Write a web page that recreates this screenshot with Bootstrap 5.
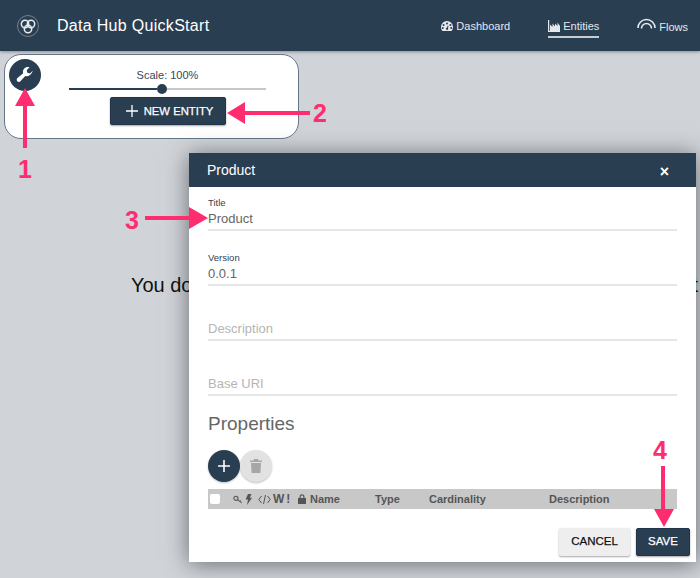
<!DOCTYPE html>
<html lang="en">
<head>
    <meta charset="UTF-8">
    <meta name="viewport" content="width=device-width, initial-scale=1.0">
    <title>Data Hub QuickStart</title>
    <link href="https://cdn.jsdelivr.net/npm/bootstrap@5.3.0/dist/css/bootstrap.min.css" rel="stylesheet">
    <style>
        html, body { height: 100%; }
        body { background: #d0d4d9; font-family: "Liberation Sans", Arial, sans-serif; overflow: hidden; position: relative; }
        .hub-bar { background: #2a3e52; height: 51px; padding: 0; box-shadow: 0 1px 3px rgba(0,0,0,.35); }
        .hub-brand { color: #fff; font-size: 16px; letter-spacing: .3px; margin-left: 17px; gap: 18px; padding: 0; }
        .hub-brand:hover { color: #fff; }
        .hub-links { gap: 38px; margin-right: 12px; height: 51px; }
        .hub-link { color: #e4e8ec; font-size: 11px; padding: 0 0 2px; display: flex; align-items: center; gap: 3px; height: 20px; margin-top: 5px; border-bottom: 2px solid transparent; }
        .hub-link:hover { color: #fff; }
        .hub-link.is-on { border-bottom-color: #c6ccd3; }
        .flow-icon { margin-bottom: 6px; }
        .flow-text { margin-top: 2px; }
        .tool-panel { width: 295px; height: 85px; margin: 3px 0 0 4px; padding: 4px; background: #fff; border: 1px solid #66768a; border-radius: 17px; }
        .tool-round { width: 32px; height: 32px; border-radius: 50%; background: #2a3e52; border: 0; padding: 0; flex: none; }
        .scale-label { font-size: 11px; color: #35475a; margin-top: 10px; line-height: 13px; }
        .scale-track { width: 197px; height: 10px; margin-top: 2px; }
        .scale-fill { height: 2px; background: #2a3e52; width: 88px; }
        .scale-dot { width: 10px; height: 10px; border-radius: 50%; background: #2a3e52; }
        .scale-rest { height: 2px; background: #c4c8cc; flex: 1; }
        .btn-hub { background: #2a3e52; color: #fff; border: 1px solid #22344a; border-radius: 2px; font-size: 11.5px; font-weight: 400; -webkit-text-stroke: .25px currentColor; height: 28px; padding: 0; box-shadow: 0 1px 2px rgba(0,0,0,.35); }
        .btn-hub:hover { background: #2a3e52; color: #fff; }
        .btn-new { width: 116px; margin-top: 3px; gap: 6px; padding-left: 4px; font-size: 11.3px; }
        .empty-note { font-size: 20px; letter-spacing: -.012px; color: #111; white-space: nowrap; margin: 134px 0 0 131px; line-height: 24px; }
        .dialog-box { position: absolute; left: 189px; top: 153px; width: 507px; height: 409px; background: #fff; border: 0; border-radius: 0; box-shadow: 0 2px 22px rgba(0,0,0,.5); }
        .dialog-head { background: #2a3e52; color: #fff; height: 34px; flex: none; padding: 0 27px 0 18px; font-size: 14px; border-radius: 0 !important; border: 0; }
        .dialog-close { color: #fff; font-size: 16px; font-weight: 700; line-height: 1; background: none; border: 0; padding: 0; margin-top: 3px; }
        .dialog-body { padding: 10px 19px 0; flex: none; }
        .hub-field { height: 34px; margin-bottom: 21px; }
        .hub-field label { display: block; font-size: 9.5px; color: #2f4254; line-height: 11px; min-height: 11px; margin: 0; }
        .hub-field input { border: 0; border-bottom: 2px solid #e6e6e6; border-radius: 0; padding: 0 0 1px; height: 23px; font-size: 13px; color: #666; box-shadow: none; background: transparent; }
        .hub-field input::placeholder { color: #b5b5b5; }
        .props-title { font-size: 19px; font-weight: 400; color: #666; line-height: 24px; margin: -5px 0 0; }
        .round-add, .round-del { width: 32px; height: 32px; border-radius: 50%; border: 0; padding: 0; flex: none; box-shadow: 0 1px 2px rgba(0,0,0,.25); }
        .round-add { background: #2a3e52; }
        .round-del { background: #e2e2e2; }
        .props-tools { margin-top: 14px; }
        .props-head { background: #c8c8c8; height: 20px; margin-top: 7px; font-size: 11px; font-weight: 700; color: #555; }
        .props-check { width: 10px; height: 10px; background: #fff; border-radius: 2px; margin-left: 2px; flex: none; }
        .col-flags { width: 65px; margin-left: 13px; gap: 2px; flex: none; }
        .flag-letter { font-size: 12px; }
        .col-name { width: 65px; flex: none; margin-left: 4px; }
        .col-type { width: 54px; flex: none; }
        .col-card { width: 120px; flex: none; }
        .dialog-foot { padding: 0 6px 0 0; margin-top: 19px; gap: 6px; }
        .btn-cancel { background: #eee; color: #111; border: 0; width: 71px; box-shadow: 0 1px 2px rgba(0,0,0,.35); }
        .btn-cancel:hover { background: #eee; color: #111; }
        .btn-save { width: 54px; }
        .note-layer { position: absolute; left: 0; top: 0; width: 700px; height: 578px; pointer-events: none; }
        .note-num { position: absolute; color: #ff2d6f; font-size: 25px; font-weight: 700; line-height: 25px; }
        .note-a { left: 18px; top: 157px; }
        .note-b { left: 313px; top: 101px; }
        .note-c { left: 125px; top: 208px; }
        .note-d { left: 653px; top: 438px; }
    </style>
</head>
<body>
    <nav class="navbar hub-bar d-flex flex-nowrap justify-content-between align-items-center">
        <a class="navbar-brand hub-brand d-flex align-items-center" href="#">
            <svg width="22" height="22" viewBox="0 0 22 22" fill="none" stroke="#e8ebee">
                <circle cx="11" cy="11" r="10.5" stroke="#8795a3" stroke-width=".8"/>
                <circle cx="8" cy="9" r="3.7" stroke-width="1.5"/>
                <circle cx="14" cy="9" r="3.7" stroke-width="1.5"/>
                <circle cx="11" cy="14" r="3.7" stroke-width="1.5"/>
            </svg>
            <span>Data Hub QuickStart</span>
        </a>
        <div class="d-flex align-items-center hub-links">
            <a class="nav-link hub-link" href="#">
                <svg width="12" height="10" viewBox="0 0 12 10"><path fill="#e4e8ec" fill-rule="evenodd" d="M6 0a6 6 0 0 0-6 6c0 1.500.5 2.900 1.400 4h9.200A6 6 0 0 0 12 6a6 6 0 0 0-6-6zM6 1.500a1 1 0 1 1 0 2 1 1 0 0 1 0-2zM2.600 3a1 1 0 1 1 0 2 1 1 0 0 1 0-2zm6.800 0a1 1 0 1 1 0 2 1 1 0 0 1 0-2zM6.800 4.500 7.600 5 6.900 7a1.100 1.100 0 1 1-1-.3zM1.800 6a1 1 0 1 1 0 2 1 1 0 0 1 0-2zm8.400 0a1 1 0 1 1 0 2 1 1 0 0 1 0-2z"/></svg>
                Dashboard
            </a>
            <a class="nav-link hub-link is-on" href="#">
                <svg width="12" height="12" viewBox="0 0 12 12"><path fill="#e4e8ec" d="M0 0h1.200v10.800H12V12H0zM2 10.800V4.500L4.500 7V3.500L7 6.500V3.500L9.500 6V2.500L12 6v4.800z"/></svg>
                Entities
            </a>
            <a class="nav-link hub-link" href="#">
                <svg class="flow-icon" width="19" height="11" viewBox="0 0 19 11" fill="none" stroke="#e4e8ec" stroke-width="1.6"><path d="M1 10a8.500 8.500 0 0 1 17 0"/><path d="M4.500 10.500a5 5 0 0 1 10 0"/></svg>
                <span class="flow-text">Flows</span>
            </a>
        </div>
    </nav>

    <div class="tool-panel d-flex align-items-start">
        <button class="tool-round d-flex align-items-center justify-content-center" type="button" aria-label="Tools">
            <svg width="18" height="18" viewBox="0 0 20 20"><path fill="#fff" d="M18.600 5.200 15.500 8.200 12.600 7.500 11.900 4.600 15 1.500C12.800.8 10.400 1.400 9 3c-1.300 1.400-1.600 3.300-1 5L1.600 13.400c-1 .9-1.100 2.500-.2 3.500 1 1 2.500 1 3.500 0L10.300 11.200c1.700.6 3.700.2 5.100-1.100 1.700-1.400 2.700-3 3.200-4.900z"/></svg>
        </button>
        <div class="d-flex flex-column align-items-center flex-grow-1">
            <div class="scale-label">Scale: 100%</div>
            <div class="scale-track d-flex align-items-center">
                <div class="scale-fill"></div>
                <div class="scale-dot"></div>
                <div class="scale-rest"></div>
            </div>
            <button class="btn btn-hub btn-new d-flex align-items-center justify-content-center" type="button">
                <svg width="12" height="12" viewBox="0 0 12 12" stroke="#fff" stroke-width="1.300"><path d="M6 0v12M0 6h12"/></svg>
                NEW ENTITY
            </button>
        </div>
    </div>

    <div class="empty-note">You don't have any entities yet. Click the New Entity icon to start</div>

    <div class="card dialog-box">
        <div class="card-header dialog-head d-flex justify-content-between align-items-center">
            <span>Product</span>
            <button class="dialog-close" type="button" aria-label="Close">×</button>
        </div>
        <div class="dialog-body">
            <div class="hub-field">
                <label for="fTitle">Title</label>
                <input id="fTitle" class="form-control" value="Product">
            </div>
            <div class="hub-field">
                <label for="fVersion">Version</label>
                <input id="fVersion" class="form-control" value="0.0.1">
            </div>
            <div class="hub-field">
                <label></label>
                <input class="form-control" placeholder="Description">
            </div>
            <div class="hub-field">
                <label></label>
                <input class="form-control" placeholder="Base URI">
            </div>
            <h4 class="props-title">Properties</h4>
            <div class="props-tools d-flex">
                <button class="round-add d-flex align-items-center justify-content-center" type="button" aria-label="Add">
                    <svg width="12" height="12" viewBox="0 0 12 12" stroke="#fff" stroke-width="1.600"><path d="M6 0v12M0 6h12"/></svg>
                </button>
                <button class="round-del d-flex align-items-center justify-content-center" type="button" aria-label="Delete">
                    <svg width="12" height="14" viewBox="0 0 12 14"><path fill="#a6a6a6" d="M4 0h4l.6 1.500H12V3H0V1.500h3.400zM1 4h10l-.6 10H1.600z"/></svg>
                </button>
            </div>
            <div class="props-head d-flex align-items-center">
                <div class="props-check"></div>
                <div class="col-flags d-flex align-items-center">
                    <svg width="10" height="9" viewBox="0 0 12 10" fill="none" stroke="#555" stroke-width="1.300"><circle cx="3.500" cy="3.500" r="2.500"/><path d="M5.500 5.500 10.500 9M8 7.500 9 6"/></svg>
                    <svg width="7" height="11" viewBox="0 0 7 11"><path fill="#555" d="M3 0h3.500L4.800 3.800H7L2 11l1-5.500H.6z"/></svg>
                    <svg class="ms-1" width="13" height="9" viewBox="0 0 13 9" fill="none" stroke="#555"><path d="M3.500 1 .8 4.500l2.700 3.500M9.500 1l2.700 3.500L9.500 8M7.500 0 5.500 9"/></svg>
                    <span class="flag-letter">W</span><span class="flag-letter">!</span>
                </div>
                <svg width="8" height="10" viewBox="0 0 8 10"><path fill="#555" fill-rule="evenodd" d="M1.500 4V2.800a2.500 2.500 0 0 1 5 0V4H8v6H0V4zm1.200 0h2.600V2.800a1.300 1.300 0 0 0-2.600 0z"/></svg>
                <div class="col-name">Name</div>
                <div class="col-type">Type</div>
                <div class="col-card">Cardinality</div>
                <div>Description</div>
            </div>
        </div>
        <div class="dialog-foot d-flex justify-content-end">
            <button class="btn btn-hub btn-cancel" type="button">CANCEL</button>
            <button class="btn btn-hub btn-save" type="button">SAVE</button>
        </div>
    </div>

    <!-- pink callouts on top of the shot -->
    <svg class="note-layer" viewBox="0 0 700 578">
        <g fill="#ff2d6f">
            <path d="M23 148V106h-8l10-18 10 18h-8v42z"/>
            <path d="M310 111v4H245v9l-18-11 18-11v9z"/>
            <path d="M145 216v4h44v9l19-11-19-11v9z"/>
            <path d="M661 466h4v43h9l-10 18-10-18h7z"/>
        </g>
    </svg>
    <div class="note-num note-a">1</div>
    <div class="note-num note-b">2</div>
    <div class="note-num note-c">3</div>
    <div class="note-num note-d">4</div>
</body>
</html>
